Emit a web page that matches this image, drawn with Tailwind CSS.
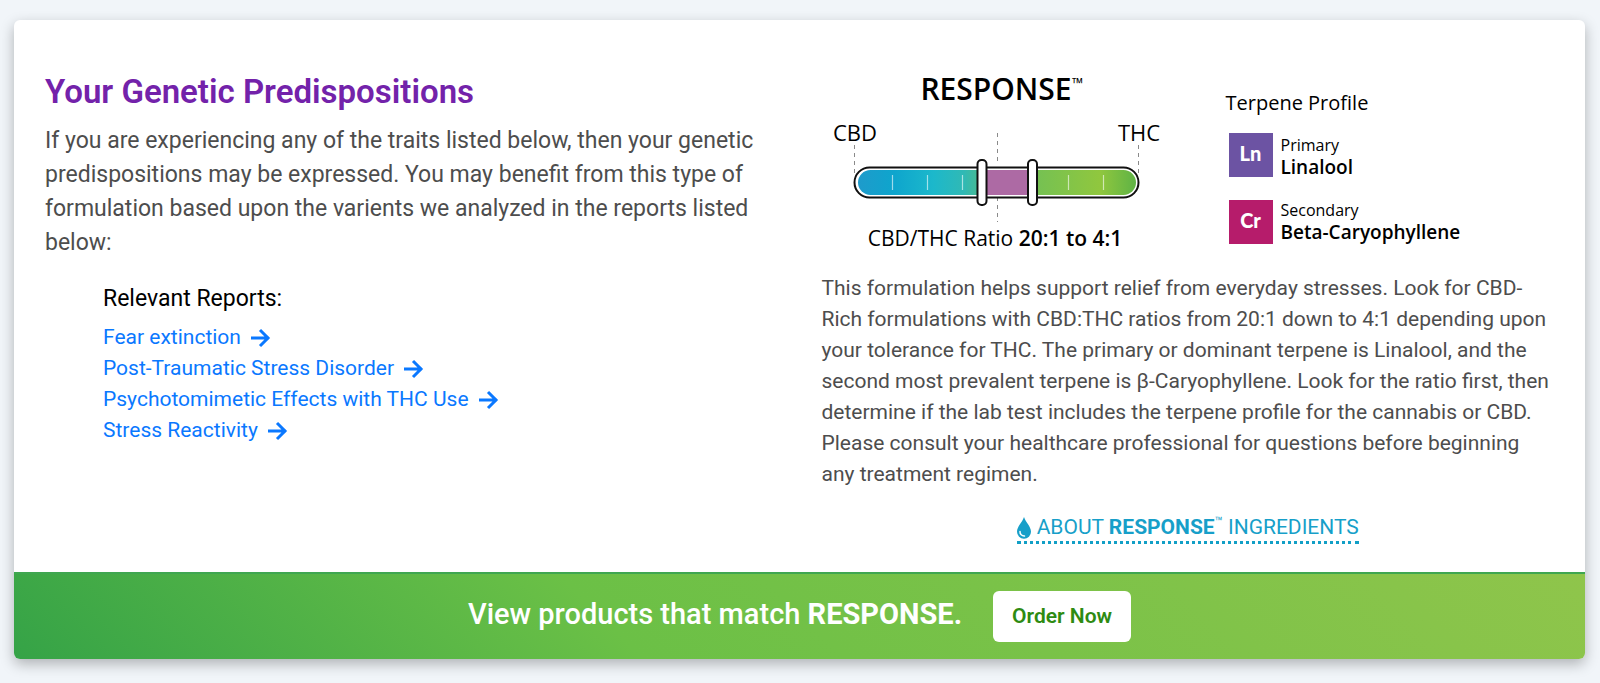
<!DOCTYPE html>
<html lang="en">
<head>
  <meta charset="UTF-8" />
  <title>Your Genetic Predispositions</title>
  <script src="https://cdn.jsdelivr.net/npm/@tailwindcss/browser@4"></script>
</head>
<body class="bg-[#f1f5f9] min-h-screen pl-3.5 pr-[15px] py-5 font-['Roboto',sans-serif]">

  <div class="bg-white rounded-md overflow-hidden shadow-[0_5px_14px_rgba(0,0,0,0.28)]">
    <div class="grid grid-cols-2 gap-11 px-[31px] pb-[26px]">

      <!-- Left column -->
      <div class="pt-12">
        <h2 class="text-[33px] leading-[48px] font-semibold text-[#7322aa]">Your Genetic Predispositions</h2>
        <p class="mt-2 text-[23px] leading-[34px] text-[#4d4d4d]">
          If you are experiencing any of the traits listed below, then your genetic predispositions may be expressed. You may benefit from this type of formulation based upon the varients we analyzed in the reports listed below:
        </p>

        <div class="mt-[22px] pl-[58px]">
          <h3 class="text-[23px] leading-[34px] text-black">Relevant Reports:</h3>
          <ul class="mt-1.5 text-[21px] leading-[31px] text-[#0a78ff]">
            <li>
              <a href="#" class="inline-flex items-center gap-2.5">Fear extinction
                <svg class="w-5 h-5" viewBox="0 0 20 20" fill="none" stroke="currentColor" stroke-width="3"><path d="M0 10h18M9 2l8 8-8 8" /></svg>
              </a>
            </li>
            <li>
              <a href="#" class="inline-flex items-center gap-2.5">Post-Traumatic Stress Disorder
                <svg class="w-5 h-5" viewBox="0 0 20 20" fill="none" stroke="currentColor" stroke-width="3"><path d="M0 10h18M9 2l8 8-8 8" /></svg>
              </a>
            </li>
            <li>
              <a href="#" class="inline-flex items-center gap-2.5">Psychotomimetic Effects with THC Use
                <svg class="w-5 h-5" viewBox="0 0 20 20" fill="none" stroke="currentColor" stroke-width="3"><path d="M0 10h18M9 2l8 8-8 8" /></svg>
              </a>
            </li>
            <li>
              <a href="#" class="inline-flex items-center gap-2.5">Stress Reactivity
                <svg class="w-5 h-5" viewBox="0 0 20 20" fill="none" stroke="currentColor" stroke-width="3"><path d="M0 10h18M9 2l8 8-8 8" /></svg>
              </a>
            </li>
          </ul>
        </div>
      </div>

      <!-- Right column -->
      <div class="pt-[50px]">
        <div class="flex gap-16 font-['Open_Sans',sans-serif] text-black">
          <svg class="w-[340px] h-[190px] shrink-0 overflow-visible" viewBox="1 0 340 190" role="img" aria-label="CBD/THC ratio">
            <defs>
              <linearGradient id="ratio" x1="0" x2="1" y1="0" y2="0">
                <stop offset="0" stop-color="#1e9bcb" />
                <stop offset="0.13" stop-color="#0ea5cd" />
                <stop offset="0.27" stop-color="#1cb8cb" />
                <stop offset="0.38" stop-color="#30b9b5" />
                <stop offset="0.45" stop-color="#4dbb8a" />
                <stop offset="0.65" stop-color="#76c152" />
                <stop offset="0.87" stop-color="#90c73e" />
                <stop offset="1" stop-color="#5fb345" />
              </linearGradient>
            </defs>
            <text x="175" y="30" text-anchor="middle" font-size="30" font-weight="600">RESPONSE</text>
            <text x="251" y="19" font-size="15">™</text>
            <text x="34" y="71" text-anchor="middle" font-size="22">CBD</text>
            <text x="318" y="71" text-anchor="middle" font-size="22">THC</text>
            <g stroke="#8a8a8a" stroke-width="1" stroke-dasharray="4 4">
              <path d="M33.5 75v28M317.5 75v28M176.5 63v30M176.5 127v25" />
            </g>
            <rect x="33.5" y="97.500" width="284" height="30" rx="15" fill="#fff" stroke="#111" stroke-width="2" />
            <rect x="37" y="100" width="278" height="25" rx="12.500" fill="url(#ratio)" />
            <rect x="166" y="100" width="42" height="25" fill="#ad6aa4" />
            <path d="M71.500 105v15M106.500 105v15M141.500 105v15M247.500 105v15M282.500 105v15" stroke="#fff" stroke-opacity="0.6" stroke-width="1.200" />
            <rect x="156.500" y="90" width="9" height="45" rx="4" fill="#fff" stroke="#111" stroke-width="2" />
            <rect x="207" y="90" width="9" height="45" rx="4" fill="#fff" stroke="#111" stroke-width="2" />
            <text x="174" y="176" text-anchor="middle" font-size="21">CBD/THC Ratio <tspan font-weight="600">20:1 to 4:1</tspan></text>
          </svg>

          <div class="pt-4">
            <h4 class="text-xl leading-[34px]">Terpene Profile</h4>
            <div class="mt-2.5 ml-[3px] flex items-center gap-2">
              <span class="flex w-11 h-11 items-center justify-center bg-[#6c53a3] font-['Lato',sans-serif] text-xl font-black text-white pb-1">Ln</span>
              <p class="pt-1 text-base leading-[22px]">Primary<br /><span class="text-[19px] font-semibold">Linalool</span></p>
            </div>
            <div class="mt-5 ml-[3px] flex items-center gap-2">
              <span class="flex w-11 h-11 items-center justify-center bg-[#b61c6b] font-['Lato',sans-serif] text-xl font-black text-white pb-1">Cr</span>
              <p class="text-base leading-[22px]">Secondary<br /><span class="text-[19px] font-semibold">Beta-Caryophyllene</span></p>
            </div>
          </div>
        </div>

        <p class="mt-[13px] text-[21px] leading-[31px] text-[#4d4d4d]">
          This formulation helps support relief from everyday stresses. Look for CBD-Rich formulations with CBD:THC ratios from 20:1 down to 4:1 depending upon your tolerance for THC. The primary or dominant terpene is Linalool, and the second most prevalent terpene is β-Caryophyllene. Look for the ratio first, then determine if the lab test includes the terpene profile for the cannabis or CBD. Please consult your healthcare professional for questions before beginning any treatment regimen.
        </p>

        <div class="mt-6 text-center">
          <a href="#" class="inline-flex items-center gap-1.5 border-b-3 border-dotted border-[#129fc6] text-[21px] leading-[27px] text-[#179fc9]">
            <svg class="w-3.5 h-[22px]" viewBox="0 0 14 22"><path d="M7 0C8.500 5 14 9.500 14 14.800A7 7 0 0 1 0 14.800C0 9.500 5.500 5 7 0Z" fill="currentColor" /><path d="M3 14.500a4.200 4.200 0 0 0 4.500 4.500" fill="none" stroke="#fff" stroke-width="1.500" stroke-linecap="round" /></svg>
            <span>ABOUT <b class="font-bold">RESPONSE</b><sup class="text-[13px] -top-2">™</sup> INGREDIENTS</span>
          </a>
        </div>
      </div>
    </div>

    <!-- Order bar -->
    <div class="flex items-center justify-center gap-[31px] border-t-2 border-[#3fa650] bg-[linear-gradient(45deg,#35a347_0%,#6bc046_38%,#8fc54b_100%)] py-[17px]">
      <p class="pb-1 text-[29px] leading-[44px] font-medium text-white">View products that match <b class="font-bold">RESPONSE.</b></p>
      <button class="rounded-md bg-white px-[19px] py-2.5 text-[21px] leading-[31px] font-semibold text-[#2e8b12]">Order Now</button>
    </div>
  </div>

</body>
</html>
